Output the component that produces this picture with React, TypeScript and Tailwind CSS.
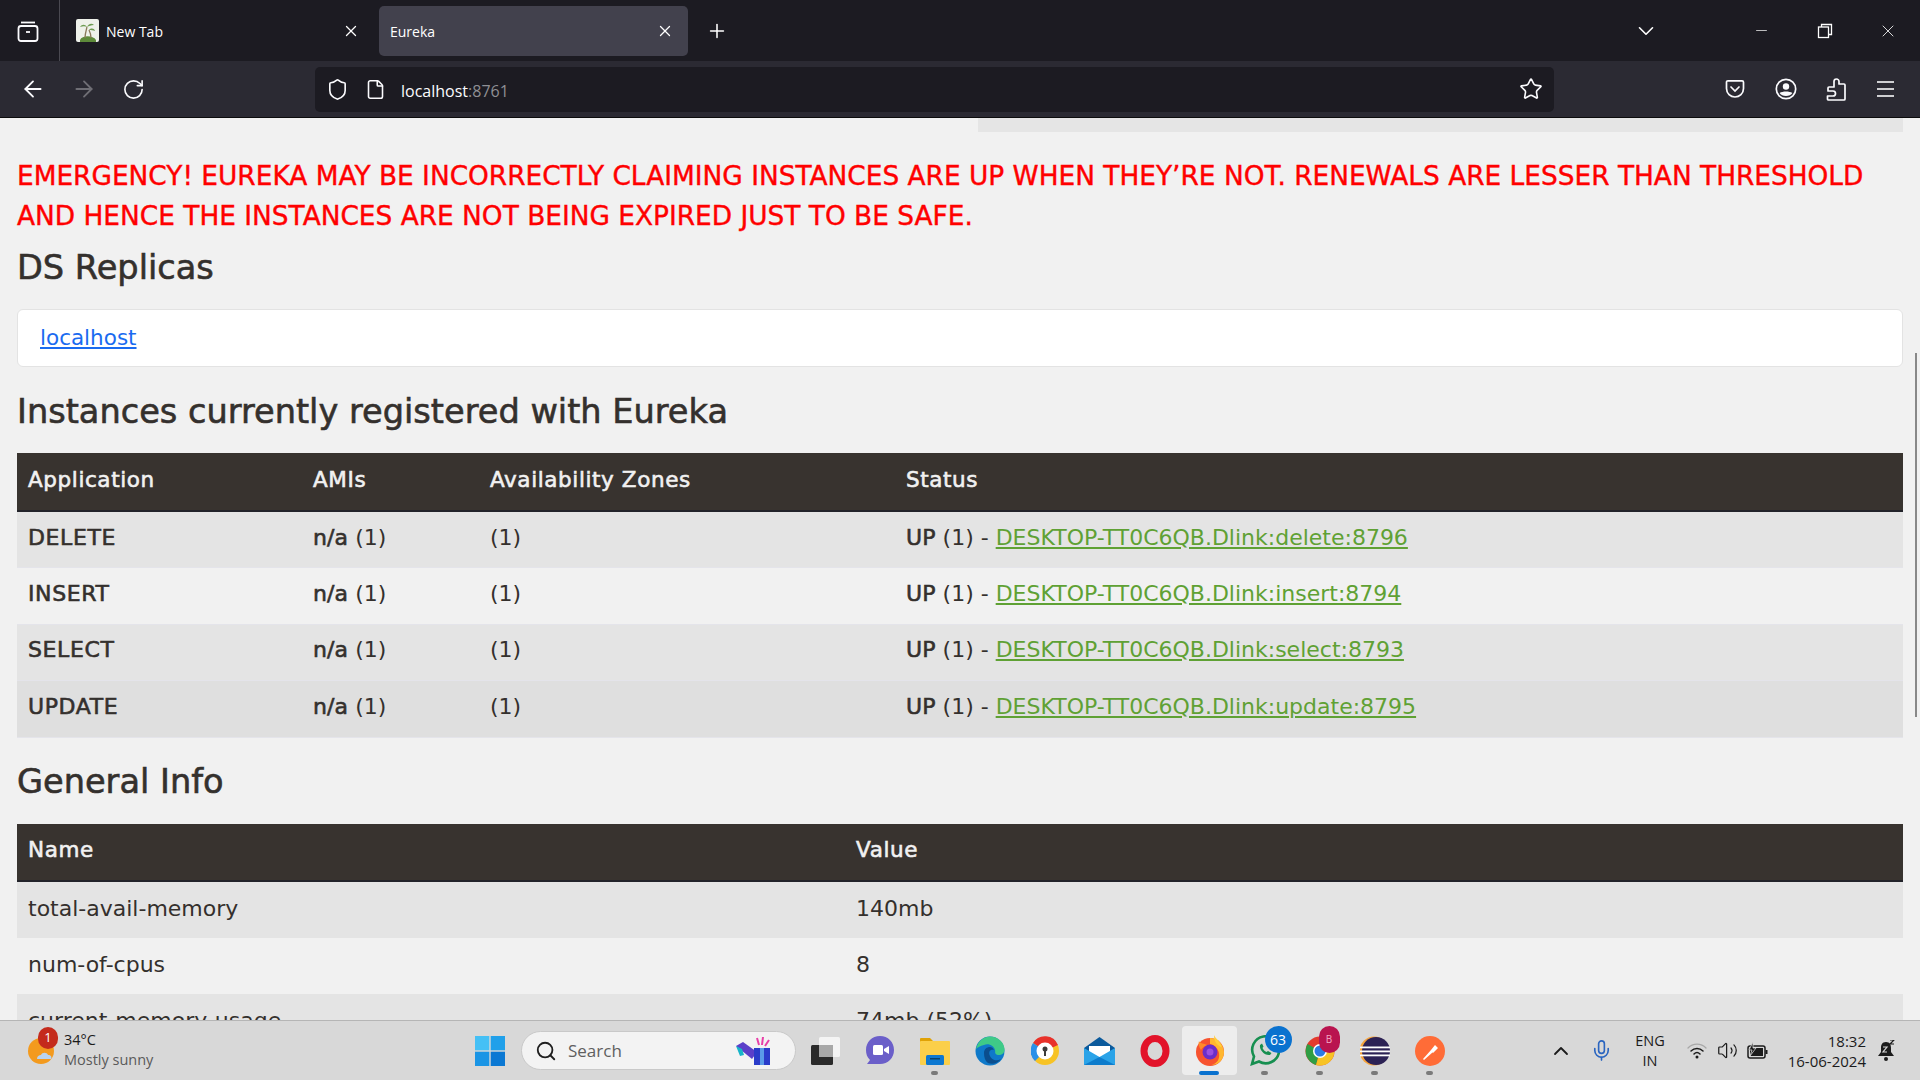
import React from "react";
import { X, Plus, ArrowLeft, ArrowRight, RotateCw, Shield, File, Star, ChevronDown, ChevronUp, Minus, Search, Mic, Volume2 } from "lucide-react";

const UI = "font-['Open_Sans','Noto_Sans',sans-serif]";
const BOLD = "tracking-[0.6px] [-webkit-text-stroke:0.6px_currentColor]";
const BOLD_INLINE = "font-normal tracking-[0.1px] [-webkit-text-stroke:0.6px_currentColor]";

const instances = [
  { name: "DELETE", link: "DESKTOP-TT0C6QB.Dlink:delete:8796", bg: "bg-[#e4e4e4]" },
  { name: "INSERT", link: "DESKTOP-TT0C6QB.Dlink:insert:8794", bg: "bg-[#f1f1f1]" },
  { name: "SELECT", link: "DESKTOP-TT0C6QB.Dlink:select:8793", bg: "bg-[#e4e4e4]" },
  { name: "UPDATE", link: "DESKTOP-TT0C6QB.Dlink:update:8795", bg: "bg-[#dfdfdf]" },
];

function TabBar() {
  return (
    <div className={`flex h-[61px] shrink-0 items-center bg-[#1c1b22] text-white ${UI}`}>
      <div className="flex h-full w-[60px] shrink-0 items-center justify-center border-r border-[#4a4951]">
        <svg className="mr-[3px]" width="24" height="24" viewBox="0 0 24 24" fill="none" stroke="#fbfbfe" strokeWidth="1.8">
          <path d="M5 3.5h14" />
          <rect x="2.5" y="7" width="19" height="15" rx="2.5" />
          <path d="M10 13h4" />
        </svg>
      </div>
      <div className="ml-[16px] flex w-[285px] shrink-0 items-center">
        <svg width="23" height="23" viewBox="0 0 23 23">
          <rect width="23" height="23" rx="2" fill="#eef1ea" />
          <path d="M4 21c2-5 13-5 16 0v2H4z" fill="#5d8a3a" />
          <path d="M9 19c0-4 1-7 2-11M15 19c0-3-1-6-2-8" stroke="#8a7a5a" strokeWidth="1.3" fill="none" />
          <path d="M11 8C9 5 6 5 4 8c3-1 5-1 7 0zm0 0c2-4 5-4 7-2-3 0-5 1-7 2zm2 3c2-2 5-2 6 1-2-1-4-1-6-1z" fill="#6d9c52" />
        </svg>
        <span className="ml-[7px] flex-1 pt-[2px] text-[14px] leading-none">New Tab</span>
        <X size={18} strokeWidth={1.7} />
        <span className="w-[1px]" />
      </div>
      <div className="ml-[18px] flex h-[50px] w-[309px] shrink-0 items-center rounded-[5px] bg-[#42414d] pl-[11px] pr-[14px]">
        <span className="flex-1 pt-[2px] text-[14px] leading-none">Eureka</span>
        <X size={18} strokeWidth={1.7} />
      </div>
      <Plus className="ml-[18px] shrink-0" size={22} strokeWidth={1.7} />
      <div className="flex-1" />
      <ChevronDown size={26} strokeWidth={1.5} />
      <Minus className="ml-[94px]" size={17} strokeWidth={1} />
      <svg className="ml-[47px]" width="16" height="16" viewBox="0 0 16 16" fill="none" stroke="#fff" strokeWidth="1.3">
        <rect x="1.5" y="4" width="10" height="10.5" />
        <path d="M4.5 4V1.5h10v10H11.5" />
      </svg>
      <X className="ml-[45px] mr-[22px]" size={20} strokeWidth={1} />
    </div>
  );
}

function ToolBar() {
  return (
    <div className={`flex h-[57px] shrink-0 items-center border-b border-[#0c0c0d] bg-[#2b2a33] text-[#fbfbfe] ${UI}`}>
      <ArrowLeft className="ml-[20px]" size={26} strokeWidth={1.7} />
      <ArrowRight className="ml-[25px] text-[#6f6e75]" size={26} strokeWidth={1.7} />
      <RotateCw className="ml-[25px]" size={23} strokeWidth={1.7} />
      <div className="ml-[170px] flex h-[45px] w-[1239px] shrink-0 items-center rounded-[5px] bg-[#1c1b22] pl-[11px] pr-[11px]">
        <Shield size={23} strokeWidth={1.7} />
        <File className="ml-[16px]" size={21} strokeWidth={1.8} />
        <span className="ml-[15px] flex-1 pt-[3px] text-[16px] leading-none">
          localhost<span className="text-[#8f8f94]">:8761</span>
        </span>
        <Star size={24} strokeWidth={1.6} />
      </div>
      <svg className="ml-[171px]" width="20" height="20" viewBox="0 0 20 20" fill="none" stroke="#fbfbfe" strokeWidth="1.7">
        <path d="M1.500 3.200c0-.9.6-1.400 1.400-1.400h14.200c.8 0 1.400.5 1.400 1.400v6.300c0 5-4 8.500-8.500 8.500s-8.500-3.500-8.500-8.500z" />
        <path d="M6 8l4 4 4-4" strokeLinecap="round" />
      </svg>
      <svg className="ml-[30px]" width="22" height="22" viewBox="0 0 22 22" fill="none" stroke="#fbfbfe" strokeWidth="1.7">
        <circle cx="11" cy="11" r="9.700" />
        <circle cx="11" cy="8.500" r="3.200" fill="#fbfbfe" stroke="none" />
        <path d="M4.600 15c3-2 9.800-2 12.800 0-2 4-10.800 4-12.800 0z" fill="#fbfbfe" stroke="none" />
      </svg>
      <svg className="ml-[29px]" width="20" height="23" viewBox="0 0 20 23" fill="none" stroke="#fbfbfe" strokeWidth="1.7" strokeLinejoin="round">
        <path d="M8 5V3.500a2.500 2.500 0 0 1 5 0V6h5a1 1 0 0 1 1 1v14a1 1 0 0 1-1 1H2.500a1 1 0 0 1-1-1v-3H7a2.500 2.500 0 0 0 0-5H2v-3a1 1 0 0 1 1-1h5z" />
      </svg>
      <div className="ml-[31px] flex w-[17px] flex-col gap-[5px]">
        <span className="h-[2px] bg-[#cfcfd2]" />
        <span className="h-[2px] bg-[#cfcfd2]" />
        <span className="h-[2px] bg-[#cfcfd2]" />
      </div>
    </div>
  );
}

function Th({ children, h = "h-[58px]" }: { children: React.ReactNode; h?: string }) {
  return (
    <th className={`${h} border-b-[2px] border-[#22232a] bg-[#38332f] px-[11px] pb-[3px] text-left align-middle text-[21.500px] font-normal text-[#f1f1f1] ${BOLD}`}>
      {children}
    </th>
  );
}

function Page() {
  return (
    <div className="relative min-h-0 flex-1 overflow-hidden bg-[#f1f1f1] font-['DejaVu_Sans',sans-serif] text-[#34302d]">
      <div className="absolute right-[3px] top-[235px] h-[364px] w-[2px] bg-[#888888]" />
      <div className="mr-[17px] pl-[17px]">
        <div className="ml-[961px] h-[14px] bg-[#e5e5e5]" />
        <p className="mt-[24px] text-[26.400px] leading-[40px] text-[#ff0000] [-webkit-text-stroke:0.4px_currentColor]">
          EMERGENCY! EUREKA MAY BE INCORRECTLY CLAIMING INSTANCES ARE UP WHEN THEY’RE NOT. RENEWALS ARE LESSER THAN THRESHOLD AND HENCE THE INSTANCES ARE NOT BEING EXPIRED JUST TO BE SAFE.
        </p>
        <h2 className="mt-[12px] text-[33.600px] font-normal leading-[40px] [-webkit-text-stroke:0.6px_currentColor]">DS Replicas</h2>
        <div className="mt-[21px] flex h-[58px] items-center rounded-[6px] border border-[#e3e3e3] bg-white pl-[22px] text-[21.500px]">
          <a className="text-[#1a6bf0] underline">localhost</a>
        </div>
        <h2 className="mt-[25px] text-[33.600px] font-normal leading-[40px] [-webkit-text-stroke:0.6px_currentColor]">Instances currently registered with Eureka</h2>
        <table className="mt-[21px] w-full table-fixed border-collapse text-[22px]">
          <colgroup>
            <col className="w-[285px]" />
            <col className="w-[177px]" />
            <col className="w-[416px]" />
            <col />
          </colgroup>
          <thead>
            <tr>
              <Th>Application</Th>
              <Th>AMIs</Th>
              <Th>Availability Zones</Th>
              <Th>Status</Th>
            </tr>
          </thead>
          <tbody>
            {instances.map((r) => (
              <tr key={r.name} className={r.bg}>
                <td className={`h-[56.500px] border-b border-[#e4e4ea] px-[11px] pb-[5px] ${BOLD}`}>{r.name}</td>
                <td className="border-b border-[#e4e4ea] px-[11px] pb-[5px]">
                  <b className={BOLD_INLINE}>n/a</b> (1)
                </td>
                <td className="border-b border-[#e4e4ea] px-[11px] pb-[5px]">(1)</td>
                <td className="border-b border-[#e4e4ea] px-[11px] pb-[5px]">
                  <b className={BOLD_INLINE}>UP</b> (1) - <a className="text-[#5fa134] underline">{r.link}</a>
                </td>
              </tr>
            ))}
          </tbody>
        </table>
        <h2 className="mt-[24px] text-[33.600px] font-normal leading-[40px] [-webkit-text-stroke:0.6px_currentColor]">General Info</h2>
        <table className="mt-[22px] w-full table-fixed border-collapse text-[22px]">
          <colgroup>
            <col className="w-[828px]" />
            <col />
          </colgroup>
          <thead>
            <tr>
              <Th h="h-[57px]">Name</Th>
              <Th h="h-[57px]">Value</Th>
            </tr>
          </thead>
          <tbody>
            <tr className="bg-[#e4e4e4]">
              <td className="h-[57px] px-[11px] pb-[3px]">total-avail-memory</td>
              <td className="px-[11px] pb-[3px]">140mb</td>
            </tr>
            <tr className="bg-[#f1f1f1]">
              <td className="h-[56px] px-[11px] pb-[3px]">num-of-cpus</td>
              <td className="px-[11px] pb-[3px]">8</td>
            </tr>
            <tr className="bg-[#e4e4e4]">
              <td className="h-[57px] px-[11px] pb-[4px]">current-memory-usage</td>
              <td className="px-[11px] pb-[4px]">74mb (52%)</td>
            </tr>
          </tbody>
        </table>
      </div>
    </div>
  );
}

const Apps: { id: string; node: React.ReactNode; dot?: boolean; active?: boolean; badge?: React.ReactNode }[] = [
  {
    id: "view",
    node: (
      <svg width="30" height="30" viewBox="0 0 30 30">
        <rect x="1" y="9" width="22" height="20" rx="1.500" fill="#2a2a2a" />
        <rect x="9" y="1" width="21" height="20" rx="1.500" fill="#f4f4f4" />
        <rect x="9" y="9" width="14" height="12" fill="#a8a8a8" />
      </svg>
    ),
  },
  {
    id: "meet",
    node: (
      <svg width="30" height="32" viewBox="0 0 30 32">
        <path d="M15 1c8 0 14 6 14 14s-6 14-14 14H2l3-4C2 22 1 19 1 15 1 7 7 1 15 1z" fill="#6b5fc9" />
        <rect x="8" y="10" width="10" height="10" rx="1.500" fill="#fff" />
        <path d="M19 14l5-3v8l-5-3z" fill="#fff" />
      </svg>
    ),
  },
  {
    id: "files",
    dot: true,
    node: (
      <svg width="30" height="28" viewBox="0 0 30 28">
        <path d="M0 2a1 1 0 0 1 1-1h9l4 4H0z" fill="#e0a206" />
        <rect y="4" width="30" height="24" rx="1" fill="#fbcf4a" />
        <rect x="6" y="18" width="18" height="10" rx="1.500" fill="#0d78d1" />
        <rect x="10" y="21" width="10" height="1.500" fill="#07426f" />
      </svg>
    ),
  },
  {
    id: "edge",
    node: (
      <svg width="30" height="30" viewBox="0 0 30 30">
        <circle cx="15" cy="15" r="14.500" fill="#0f79c9" />
        <path d="M1 13C3 4 10 .5 15 .5c8 0 14.500 6 14.500 13 0 5-5 6.500-8 5-2-1-1-3-1.500-4.500-1-4-6-7-11-5C5 10 3 11 1 13z" fill="#3fca87" />
        <path d="M9 17c0-4 3-6 6-6 2 0 3 1 4 3-4-1-6 2-4 6 1 3 6 6 11 3-3 4-8 6-13 4-3-2-4-6-4-10z" fill="#0b4e8e" />
      </svg>
    ),
  },
  {
    id: "avast",
    node: (
      <svg width="28" height="30" viewBox="0 0 28 30">
        <circle cx="14" cy="15" r="14" fill="#f7c325" />
        <path d="M14 15L2 7a14 14 0 0 1 25 2z" fill="#e8312a" />
        <path d="M14 15L2 7a14 14 0 0 0 2 18z" fill="#2a90e8" />
        <circle cx="14" cy="15" r="8.500" fill="#fff" />
        <circle cx="14" cy="13" r="2.500" fill="#3b3b3b" />
        <rect x="13" y="14" width="2" height="6" fill="#3b3b3b" />
      </svg>
    ),
  },
  {
    id: "mail",
    node: (
      <svg width="31" height="28" viewBox="0 0 31 28">
        <path d="M15.500 0L31 11v17H0V11z" fill="#0b5a9c" />
        <path d="M5 9h21v9l-10 4-11-4z" fill="#fff" />
        <path d="M0 11l15.500 9L31 11v17H0z" fill="#2aa3e8" />
        <path d="M0 28l15.500-8L31 28z" fill="#0d7ccc" />
      </svg>
    ),
  },
  {
    id: "opera",
    node: (
      <svg width="30" height="32" viewBox="0 0 30 32">
        <ellipse cx="15" cy="16" rx="11" ry="12.500" fill="none" stroke="#e2132a" strokeWidth="7" />
      </svg>
    ),
  },
  {
    id: "firefox",
    active: true,
    node: (
      <svg width="30" height="31" viewBox="0 0 30 31">
        <circle cx="15" cy="17" r="14" fill="#f7532f" />
        <path d="M15 3c6 0 13 4 14 14 0 7-5 13-13 13 6-1 9-6 8-12-1-4-4-8-9-9z" fill="#ffb72f" />
        <path d="M19 0c1 3 5 5 7 10 2 4-1 2-3 0-3-2-4-6-4-10z" fill="#ffcf3b" />
        <circle cx="15" cy="17" r="7.500" fill="#6a2ec9" />
        <circle cx="15" cy="17" r="3.500" fill="#9a4fe0" />
        <path d="M4 6c1 3 5 2 8 4-3 1-5 3-6 5-2-3-3-6-2-9z" fill="#ff8a2a" />
      </svg>
    ),
  },
  {
    id: "whatsapp",
    dot: true,
    badge: (
      <span className="absolute left-[15px] top-[-9px] flex h-[27px] w-[27px] items-center justify-center rounded-full bg-[#0a72cf] text-[14px] text-white">
        63
      </span>
    ),
    node: (
      <svg width="30" height="31" viewBox="0 0 30 31" fill="none" stroke="#178f50" strokeWidth="2.600">
        <path d="M2 29l2-7.500A13.500 13.500 0 1 1 9 26.500z" />
        <path d="M10 10c-1 5 5 11 10 10l1.500-2-3.500-2-1.500 1c-2-1-3-2-4-4l1-1.500-1.500-3z" fill="#178f50" stroke="none" />
      </svg>
    ),
  },
  {
    id: "chrome",
    dot: true,
    badge: (
      <span className="absolute left-[14px] top-[-10px] flex h-[27px] w-[21px] items-center justify-center rounded-full bg-[#b9144f] text-[10px] text-[#f3a9c4]">
        B
      </span>
    ),
    node: (
      <svg width="30" height="30" viewBox="0 0 30 30">
        <circle cx="15" cy="15" r="14.500" fill="#e33b2e" />
        <path d="M15 15L2.500 8A14.500 14.500 0 0 0 11 29z" fill="#2f9e44" />
        <path d="M15 15h14.500A14.500 14.500 0 0 1 11 29z" fill="#f7c325" />
        <circle cx="15" cy="15" r="7" fill="#fff" />
        <circle cx="15" cy="15" r="5.500" fill="#2c7be5" />
      </svg>
    ),
  },
  {
    id: "eclipse",
    dot: true,
    node: (
      <svg width="30" height="30" viewBox="0 0 30 30">
        <circle cx="14" cy="15" r="14.500" fill="#f6a43c" />
        <circle cx="16" cy="15" r="14" fill="#2c2255" />
        <rect x="0" y="10.500" width="30" height="1.800" fill="#fff" />
        <rect x="0" y="14.500" width="30" height="1.800" fill="#fff" />
        <rect x="0" y="18.500" width="30" height="1.800" fill="#fff" />
      </svg>
    ),
  },
  {
    id: "postman",
    dot: true,
    node: (
      <svg width="30" height="30" viewBox="0 0 30 30">
        <circle cx="15" cy="15" r="15" fill="#ff6c37" />
        <path d="M8 23l8-9 2 2-9 8zM16 14l4-5 3 3-5 5z" fill="#fff" />
      </svg>
    ),
  },
];

function TaskBar() {
  return (
    <div className={`flex h-[60px] shrink-0 items-center border-t border-[#b5b5b5] bg-[#d8d8d8] text-[#1b1b1b] ${UI}`}>
      <div className="relative ml-[27px] flex w-[448px] shrink-0 items-center">
        <svg width="29" height="32" viewBox="0 0 29 32">
          <circle cx="14" cy="16" r="13" fill="#f39a1e" />
          <path d="M10 24c0-3 2-4 4-4 1-3 6-3 7 0 3 0 4 2 3 4z" fill="#b9d3ee" />
        </svg>
        <span className="absolute left-[11px] top-[-5px] flex h-[22px] w-[20px] items-center justify-center rounded-full bg-[#c42b1c] text-[13px] text-white">
          1
        </span>
        <div className="ml-[8px] mt-[-2px] text-[14.500px] leading-[20px]">
          <div>34°C</div>
          <div className="text-[#5a5a5a]">Mostly sunny</div>
        </div>
      </div>
      <svg className="shrink-0" width="30" height="30" viewBox="0 0 30 30">
        <rect width="14.300" height="14.300" fill="#45c0f5" />
        <rect x="15.700" width="14.300" height="14.300" fill="#20a0ea" />
        <rect y="15.700" width="14.300" height="14.300" fill="#1a95e5" />
        <rect x="15.700" y="15.700" width="14.300" height="14.300" fill="#0b78d3" />
      </svg>
      <div className="ml-[16px] flex h-[39px] w-[275px] shrink-0 items-center rounded-full border border-[#c9c9c9] bg-[#f3f3f3] pl-[13px] pr-[23px]">
        <Search size={22} strokeWidth={2} className="text-[#1f1f1f]" />
        <span className="ml-[11px] flex-1 text-[17px] text-[#5f5f5f]">Search</span>
        <svg width="36" height="28" viewBox="0 0 36 28">
          <path d="M0 9l7-4 14 10-5 7z" fill="#5b3fc9" />
          <path d="M0 9l6 3 2 6-4 1z" fill="#17b4c9" />
          <rect x="18" y="11" width="16" height="17" fill="#2a3cc9" />
          <rect x="24" y="11" width="4" height="17" fill="#5a9be8" />
          <path d="M21 1l2 7M27 0l-1 8M33 3l-4 6" stroke="#e83fa8" strokeWidth="2" />
        </svg>
      </div>
      <div className="ml-[1px] flex shrink-0">
        {Apps.map((a) => (
          <div
            key={a.id}
            className={`relative flex h-[49px] w-[55px] items-center justify-center rounded-[4px] ${a.active ? "bg-[#ededed]" : ""}`}
          >
            <div className="relative flex items-center justify-center">
              {a.node}
              {a.badge}
            </div>
            {a.dot && <span className="absolute bottom-0 left-[24px] h-[4px] w-[7px] rounded-full bg-[#7a7a7a]" />}
            {a.active && <span className="absolute bottom-0 left-[17px] h-[4px] w-[20px] rounded-full bg-[#0a72cf]" />}
          </div>
        ))}
      </div>
      <div className="flex-1" />
      <ChevronUp size={24} strokeWidth={1.8} />
      <Mic className="ml-[17px] text-[#2a65c0]" size={23} strokeWidth={1.7} />
      <div className="ml-[22px] text-center text-[14.500px] leading-[20px]">
        <div>ENG</div>
        <div>IN</div>
      </div>
      <svg className="ml-[22px]" width="20" height="16" viewBox="0 0 20 16" fill="none" strokeLinecap="round">
        <path d="M1 5c5-5.300 13-5.300 18 0" stroke="#a8a8a8" strokeWidth="1.300" />
        <path d="M4 8c3.500-3.500 8.500-3.500 12 0" stroke="#1b1b1b" strokeWidth="1.500" />
        <path d="M7 11c2-2 4-2 6 0" stroke="#1b1b1b" strokeWidth="1.500" />
        <circle cx="10" cy="14" r="1.500" fill="#1b1b1b" />
      </svg>
      <Volume2 className="ml-[10px]" size={21} strokeWidth={1.4} />
      <svg className="ml-[9px]" width="21" height="18" viewBox="0 0 21 18" fill="none">
        <rect x="1" y="4" width="17" height="12" rx="2" stroke="#1b1b1b" strokeWidth="1.500" />
        <rect x="3" y="6" width="13" height="8" fill="#1b1b1b" />
        <rect x="18.500" y="8" width="2" height="4" fill="#1b1b1b" />
        <path d="M6 0L2 8h3l-2 6 6-8H6z" fill="#1b1b1b" stroke="#d8d8d8" strokeWidth=".8" />
      </svg>
      <div className="ml-[20px] text-right text-[15px] leading-[20px]">
        <div>18:32</div>
        <div>16-06-2024</div>
      </div>
      <svg className="ml-[11px] mr-[25px]" width="18" height="22" viewBox="0 0 18 22">
        <path d="M9 2c4 0 5 3 5 6v4l3 4H1l3-4V8c0-3 1-6 5-6z" fill="#1b1b1b" />
        <circle cx="9" cy="19" r="2" fill="#1b1b1b" />
        <path d="M6 7h4l-4 5h4" stroke="#d8d8d8" strokeWidth="1.200" fill="none" />
        <path d="M13 0h4l-4 4h4" stroke="#1b1b1b" strokeWidth="1.200" fill="none" />
      </svg>
    </div>
  );
}

export default function App() {
  return (
    <div className="flex h-[1080px] w-[1920px] flex-col overflow-hidden">
      <TabBar />
      <ToolBar />
      <Page />
      <TaskBar />
    </div>
  );
}
